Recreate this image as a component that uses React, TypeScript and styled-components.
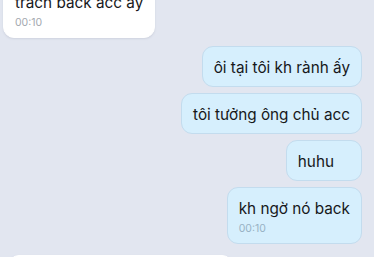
import React from 'react';
import styled, { createGlobalStyle } from 'styled-components';

const GlobalStyle = createGlobalStyle`
  html, body {
    margin: 0;
    padding: 0;
    background: #e2e6f0;
    overflow: hidden;
  }
  body {
    font-family: Inter, "Noto Sans", sans-serif;
    -webkit-font-smoothing: antialiased;
  }
`;

const Screen = styled.div`
  height: 257px;
  overflow: hidden;
`;

const Chat = styled.div`
  display: flex;
  flex-direction: column;
  margin-top: -19px;
  padding: 0 12px 0 3px;
`;

const Row = styled.div<{ $out?: boolean; $gap: number; $indent?: number }>`
  display: flex;
  justify-content: ${p => (p.$out ? 'flex-end' : 'flex-start')};
  margin-top: ${p => p.$gap}px;
  padding-left: ${p => p.$indent || 0}px;
`;

const Bubble = styled.div<{ $out?: boolean; $wide?: boolean }>`
  padding: 10px ${p => (p.$wide ? 27 : 11)}px 8px 11px;
  border-radius: 11px;
  box-sizing: border-box;
  background: ${p => (p.$out ? '#d6effd' : '#ffffff')};
  border: 1px solid ${p => (p.$out ? '#c3dcee' : '#ffffff')};
  box-shadow: ${p => (p.$out ? 'none' : '0 1px 2px rgba(120, 130, 150, 0.18)')};
`;

const Text = styled.div`
  font-size: 15.3px;
  line-height: 21px;
  color: #17181a;
  white-space: nowrap;
`;

const Time = styled.div<{ $out?: boolean }>`
  margin-top: 3px;
  margin-bottom: -1px;
  font-size: 10.5px;
  line-height: 14px;
  color: ${p => (p.$out ? '#98b2c4' : '#a4a9b0')};
`;

type Msg = {
  text: string;
  out?: boolean;
  time?: string;
  gap: number;
  indent?: number;
  wide?: boolean;
};

const messages: Msg[] = [
  { text: 'trách back acc ấy', time: '00:10', gap: 0 },
  { text: 'ôi tại tôi kh rành ấy', out: true, gap: 8 },
  { text: 'tôi tưởng ông chủ acc', out: true, gap: 6 },
  { text: 'huhu', out: true, gap: 6, wide: true },
  { text: 'kh ngờ nó back', out: true, time: '00:10', gap: 6 },
  { text: 'ừ thôi không sao đâu ông ơi', time: '00:11', gap: 11, indent: 5 },
];

const App = () => {
  return (
    <Screen>
      <GlobalStyle />
      <Chat>
        {messages.map((m, i) => (
          <Row key={i} $out={m.out} $gap={m.gap} $indent={m.indent}>
            <Bubble $out={m.out} $wide={m.wide}>
              <Text>{m.text}</Text>
              {m.time && <Time $out={m.out}>{m.time}</Time>}
            </Bubble>
          </Row>
        ))}
      </Chat>
    </Screen>
  );
};

export default App;
